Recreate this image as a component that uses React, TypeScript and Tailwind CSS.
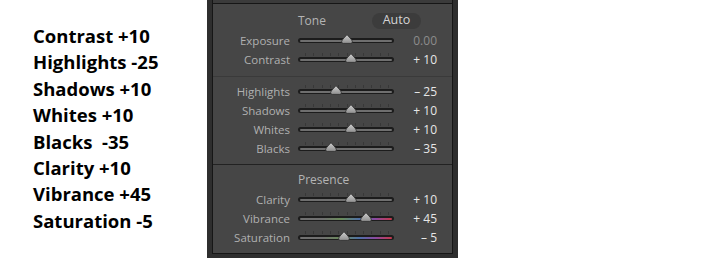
import React from "react";

type Row = { label: string; value: number; text: string; dim?: boolean; ticks?: boolean; color?: boolean };

const leftLines = [
  "Contrast +10",
  "Highlights -25",
  "Shadows +10",
  "Whites +10",
  "Blacks\u00a0 -35",
  "Clarity +10",
  "Vibrance +45",
  "Saturation -5",
];

const Thumb = () => (
  <svg width="12" height="10" viewBox="0 0 12 10">
    <defs>
      <linearGradient id="tg" x1="0" y1="0" x2="0" y2="1">
        <stop offset="0" stopColor="#d0d0d0" />
        <stop offset="1" stopColor="#8e8e8e" />
      </linearGradient>
    </defs>
    <path
      d="M6 0.6 C7 2.2 11.4 5.6 11.4 7.8 Q11.4 9.4 9.8 9.4 H2.2 Q0.6 9.4 0.6 7.8 C0.6 5.6 5 2.2 6 0.6 Z"
      fill="url(#tg)"
      stroke="#2a2a2a"
      strokeWidth="0.8"
    />
  </svg>
);

const Slider = ({ row }: { row: Row }) => {
  const pos = 48.5 + row.value * 0.43;
  const ticks = Array.from({ length: 11 }, (_, i) => 7 + i * 8.3);
  return (
    <div className="relative ml-[8px] h-full w-[96px]">
      {row.ticks &&
        ticks.map((t, i) => (
          <div
            key={i}
            className="absolute top-[3px] h-[3px] w-px bg-[#383838]"
            style={{ left: `${t}px` }}
          />
        ))}
      <div className="absolute left-0 right-0 top-[7px] h-[5px] rounded-full bg-[#1c1c1c]">
        <div
          className={
            row.color
              ? "absolute left-[2px] right-[2px] top-[1.5px] h-[2px] rounded-full bg-[linear-gradient(to_right,#707070_0%,#707070_25%,#6a8c5a_45%,#4f6fa8_65%,#8a4aa0_82%,#c8384a_100%)]"
              : "absolute left-[2px] right-[2px] top-[1.5px] h-[2px] rounded-full bg-[#6f6f6f]"
          }
        />
      </div>
      <div className="absolute top-[3px]" style={{ left: `${pos - 6}px` }}>
        <Thumb />
      </div>
    </div>
  );
};

const SliderRow = ({ row }: { row: Row }) => (
  <div className="flex h-[19px] items-center">
    <div className="w-[77px] text-right text-[11.5px] text-[#b0b0b0]">{row.label}</div>
    <Slider row={row} />
    <div className={`w-[43px] text-right text-[12px] ${row.dim ? "text-[#8c8c8c]" : "text-[#e6e6e6]"}`}>
      {row.text}
    </div>
  </div>
);

export default function App() {
  const sec2: Row[] = [
    { label: "Highlights", value: -25, text: "\u2013 25", ticks: true },
    { label: "Shadows", value: 10, text: "+ 10", ticks: true },
    { label: "Whites", value: 10, text: "+ 10", ticks: true },
    { label: "Blacks", value: -35, text: "\u2013 35", ticks: true },
  ];
  const sec3: Row[] = [
    { label: "Clarity", value: 10, text: "+ 10", ticks: true },
    { label: "Vibrance", value: 45, text: "+ 45", ticks: true, color: true },
    { label: "Saturation", value: -5, text: "\u2013 5", ticks: true, color: true },
  ];
  return (
    <div className="flex h-[258px] w-[710px] bg-white font-['Open_Sans',sans-serif]">
      <div className="w-[207px] pl-[33px] pt-[23px]">
        {leftLines.map((l) => (
          <div key={l} className="h-[26.4px] text-[18.5px] font-bold leading-[26.4px] text-black">
            {l}
          </div>
        ))}
      </div>
      <div className="flex h-[258px] w-[251px] flex-col bg-[#2e2e2e] px-[5px] pb-[4px]">
        <div className="flex flex-1 flex-col border-x border-b border-[#161616] bg-[#464646]">
          <div className="h-[4px] border-b border-[#161616] bg-[#3b3b3b]" />
          <div className="h-[72px] pt-[6px]">
            <div className="flex h-[21px] items-center pl-[85px]">
              <div className="w-[33px] text-[12px] text-[#b4b4b4]">Tone</div>
              <div className="ml-[41px] flex h-[16px] w-[49px] items-center justify-center rounded-full bg-[#3c3c3c] text-[12.5px] text-[#d4d4d4]">
                Auto
              </div>
            </div>
            <SliderRow row={{ label: "Exposure", value: 0, text: "0.00", dim: true }} />
            <SliderRow row={{ label: "Contrast", value: 10, text: "+ 10", ticks: true }} />
          </div>
          <div className="h-px bg-[#3a3a3a]" />
          <div className="h-[87px] pt-[5px]">
            {sec2.map((r) => (
              <SliderRow key={r.label} row={r} />
            ))}
          </div>
          <div className="h-px bg-[#222222]" />
          <div className="pt-[5px]">
            <div className="flex h-[20px] items-center pl-[85px] text-[12px] text-[#b4b4b4]">Presence</div>
            {sec3.map((r) => (
              <SliderRow key={r.label} row={r} />
            ))}
          </div>
        </div>
      </div>
    </div>
  );
}
